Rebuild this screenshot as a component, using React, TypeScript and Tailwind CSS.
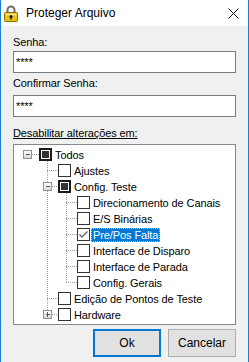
import React from "react";

type Row = {
  label: string;
  level: number;
  expand?: "minus" | "plus";
  state?: "off" | "on" | "ind";
  selected?: boolean;
  last?: boolean;
};

const rows: Row[] = [
  { label: "Todos", level: 0, expand: "minus", state: "ind", last: true },
  { label: "Ajustes", level: 1 },
  { label: "Config. Teste", level: 1, expand: "minus", state: "ind" },
  { label: "Direcionamento de Canais", level: 2 },
  { label: "E/S Binárias", level: 2 },
  { label: "Pre/Pos Falta", level: 2, state: "on", selected: true },
  { label: "Interface de Disparo", level: 2 },
  { label: "Interface de Parada", level: 2 },
  { label: "Config. Gerais", level: 2, last: true },
  { label: "Edição de Pontos de Teste", level: 1 },
  { label: "Hardware", level: 1, expand: "plus", last: true },
];

// column positions inside the tree box
const centers = [13, 33, 52];
const boxes = [25, 44, 63];
const widths = [39, 58, 77];
const LINE = "#a0a0a0";

function Gutter({ row }: { row: Row }) {
  const L = row.level;
  const c = centers[L];
  const cb = boxes[L];
  const lines: React.ReactNode[] = [];

  // level 1 spine continues through the Config. Teste children
  if (L === 2) {
    lines.push(<line key="v1" x1={centers[1] + 0.5} y1={0} x2={centers[1] + 0.5} y2={16} />);
  }
  if (L > 0) {
    lines.push(<line key="v" x1={c + 0.5} y1={0} x2={c + 0.5} y2={row.last ? 8 : 16} />);
  }
  lines.push(
    <line key="h" x1={row.expand ? c + 5 : c} y1={7.5} x2={cb} y2={7.5} />
  );
  if (row.expand === "minus") {
    const n = centers[L + 1];
    lines.push(<line key="down" x1={n + 0.5} y1={14} x2={n + 0.5} y2={16} />);
  }

  return (
    <svg width={widths[L]} height={16} className="shrink-0">
      <defs>
        <linearGradient id="exp" x1="0" y1="0" x2="0" y2="1">
          <stop offset="0" stopColor="#ffffff" />
          <stop offset="1" stopColor="#d8d8d8" />
        </linearGradient>
      </defs>
      <g stroke={LINE} strokeWidth={1} strokeDasharray="1 1" shapeRendering="crispEdges">
        {lines}
      </g>
      {row.expand && (
        <g shapeRendering="crispEdges">
          <rect x={c - 3.5} y={3.5} width={8} height={8} fill="url(#exp)" stroke="#919191" />
          <line x1={c - 1.5} y1={7.5} x2={c + 3} y2={7.5} stroke="#3d5a8c" />
          {row.expand === "plus" && (
            <line x1={c + 0.5} y1={5} x2={c + 0.5} y2={10} stroke="#3d5a8c" />
          )}
        </g>
      )}
      <g shapeRendering="crispEdges">
        {row.state === "ind" ? (
          <>
            <rect x={cb + 1} y={2} width={11} height={11} fill="#fff" stroke="#1a1a1a" strokeWidth={2} />
            <rect x={cb + 3} y={4} width={7} height={7} fill="#333" />
          </>
        ) : (
          <rect x={cb + 0.5} y={1.5} width={12} height={12} fill="#fff" stroke="#333" />
        )}
      </g>
      {row.state === "on" && (
        <polyline
          points={`${cb + 2.5},7.5 ${cb + 5},10 ${cb + 10.5},4.5`}
          fill="none"
          stroke="#555"
          strokeWidth={1.2}
        />
      )}
    </svg>
  );
}

function LockIcon() {
  return (
    <svg width={14} height={18} viewBox="0 0 14 18" className="shrink-0">
      <path d="M3.5 9 V6 a3.5 3.5 0 0 1 7 0 V9" fill="none" stroke="#6e6e6e" strokeWidth={2} />
      <rect x={0.5} y={8.5} width={13} height={9} rx={1} fill="#e8c21a" stroke="#8a6d00" />
      <rect x={1.5} y={9.5} width={11} height={2} fill="#f6e27a" />
      <circle cx={7} cy={12.5} r={1.5} fill="#1a1a1a" />
      <rect x={6.3} y={12.5} width={1.4} height={3} fill="#1a1a1a" />
    </svg>
  );
}

export default function App() {
  return (
    <div className="w-[249px] h-[362px] flex flex-col border-x border-b border-[#1c7fd6] font-['Liberation_Sans',Arial,sans-serif] text-black">
      <div className="h-[26px] shrink-0 bg-white flex items-center">
        <div className="ml-[3px] flex">
          <LockIcon />
        </div>
        <span className="ml-[8px] text-[12px]">Proteger Arquivo</span>
        <svg width={11} height={11} className="ml-auto mr-[9px]">
          <path d="M0.5 0.5 L10.5 10.5 M10.5 0.5 L0.5 10.5" stroke="#111" strokeWidth={1} />
        </svg>
      </div>

      <div className="flex-1 bg-[#f0f0f0] flex flex-col px-[12px] pt-[9px] pb-[7px] text-[11px] tracking-[-0.1px]">
        <div className="h-[16px] leading-[15px]">Senha:</div>
        <div className="h-[22px] border border-[#7a7a7a] bg-white flex items-center px-[2px] text-[11px]">
          ****
        </div>
        <div className="h-[19px] leading-[15px] pt-[3px] box-content">Confirmar Senha:</div>
        <div className="h-[22px] border border-[#7a7a7a] bg-white flex items-center px-[2px]">
          ****
        </div>
        <div className="h-[18px] mt-[9px] leading-[15px] underline">Desabilitar alterações em:</div>

        <div className="h-[181px] border border-[#828790] bg-white pt-[2px] flex flex-col">
          {rows.map((row) => (
            <div key={row.label} className="h-[16px] flex items-center">
              <Gutter row={row} />
              <span
                className={
                  row.selected
                    ? "h-[14px] px-[2px] flex items-center bg-[#0078d7] text-white outline outline-1 outline-dotted outline-[#f0c060] -outline-offset-1"
                    : "h-[14px] px-[2px] flex items-center"
                }
              >
                {row.label}
              </span>
            </div>
          ))}
        </div>

        <div className="mt-[4px] flex justify-end gap-[7px]">
          <button className="w-[68px] h-[28px] bg-[#e1e1e1] border-2 border-[#0078d7] text-[12px] tracking-normal">
            Ok
          </button>
          <button className="w-[68px] h-[28px] bg-[#e1e1e1] border border-[#adadad] text-[12px] tracking-normal">
            Cancelar
          </button>
        </div>
      </div>
    </div>
  );
}
